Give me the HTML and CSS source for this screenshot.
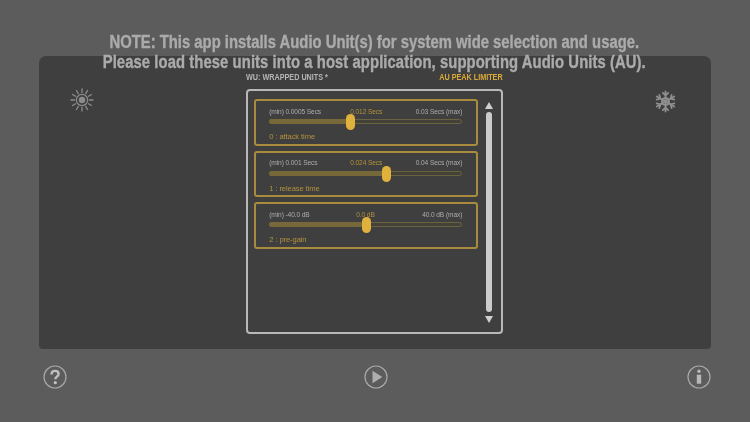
FILE: index.html
```html
<!DOCTYPE html>
<html lang="en">
<head>
<meta charset="utf-8">
<title>AU Peak Limiter</title>
<link rel="stylesheet" href="styles.css">
</head>
<body>
<div class="app">
  <main class="panel">
    <svg class="side-icon sun" viewBox="0 0 24 24" width="24" height="24" aria-hidden="true">
      <circle cx="12" cy="12" r="3.200" fill="#8c8c8c"/>
      <circle cx="12" cy="12" r="5.600" fill="none" stroke="#8c8c8c" stroke-width="1.200"/>
      <g stroke="#8c8c8c" stroke-width="1.300" stroke-linecap="round">
        <path d="M12 1v3.600M12 19.400V23M1 12h3.600M19.400 12H23"/>
        <path d="M6.500 2.500l1.800 3.100M15.700 18.400l1.800 3.100M2.500 6.500l3.100 1.800M18.400 15.700l3.100 1.800M17.500 2.500l-1.800 3.100M8.300 18.400l-1.800 3.100M21.500 6.500l-3.100 1.800M5.600 15.700l-3.100 1.800"/>
      </g>
    </svg>
    <section class="center">
      <header class="center-head">
        <span class="head-left">WU: WRAPPED UNITS *</span>
        <span class="head-right">AU PEAK LIMITER</span>
      </header>
      <div class="frame">
        <div class="cards">
          <article class="card">
            <div class="scale"><span>(min) 0.0005 Secs</span><span class="now now-a">0.012 Secs</span><span>0.03 Secs (max)</span></div>
            <div class="track"><div class="fill" style="width:41.6%"></div><div class="thumb"></div></div>
            <div class="name">0 : attack time</div>
          </article>
          <article class="card">
            <div class="scale"><span>(min) 0.001 Secs</span><span class="now now-b">0.024 Secs</span><span>0.04 Secs (max)</span></div>
            <div class="track"><div class="fill" style="width:61%"></div><div class="thumb"></div></div>
            <div class="name">1 : release time</div>
          </article>
          <article class="card">
            <div class="scale"><span>(min) -40.0 dB</span><span class="now now-c">0.0 dB</span><span>40.0 dB (max)</span></div>
            <div class="track"><div class="fill" style="width:50%"></div><div class="thumb"></div></div>
            <div class="name">2 : pre-gain</div>
          </article>
        </div>
        <div class="scroll">
          <i class="arrow up"></i>
          <i class="bar"></i>
          <i class="arrow down"></i>
        </div>
      </div>
    </section>
    <svg class="side-icon snow" viewBox="0 0 24 24" width="24" height="24" aria-hidden="true">
      <g stroke="#8f8f8f" stroke-width="1.900" fill="none" stroke-linecap="round">
        <path d="M12 1.500v21M9.200 3l2.800 2.800L14.800 3M9.200 21l2.800-2.800 2.800 2.800"/>
        <g transform="rotate(60 12 12)"><path d="M12 1.500v21M9.200 3l2.800 2.800L14.800 3M9.200 21l2.800-2.800 2.800 2.800"/></g>
        <g transform="rotate(120 12 12)"><path d="M12 1.500v21M9.200 3l2.800 2.800L14.800 3M9.200 21l2.800-2.800 2.800 2.800"/></g>
        <circle cx="12" cy="12" r="3.600" stroke-width="2.200"/>
      </g>
    </svg>
  </main>
  <footer class="footer">
    <svg viewBox="0 0 24 24" width="24" height="24" aria-hidden="true">
      <circle cx="12" cy="12" r="11" fill="none" stroke="#a8a8a8" stroke-width="1.200"/>
      <path d="M8.500 9.400c0-2.200 1.500-3.500 3.600-3.500s3.500 1.200 3.500 3c0 2.700-3.300 2.800-3.300 5.300" fill="none" stroke="#c0c0c0" stroke-width="2.400"/>
      <circle cx="12.300" cy="17.700" r="1.600" fill="#c0c0c0"/>
    </svg>
    <svg class="play" viewBox="0 0 24 24" width="24" height="24" aria-hidden="true">
      <circle cx="12" cy="12" r="11" fill="none" stroke="#a8a8a8" stroke-width="1.200"/>
      <path d="M8.500 5.800v12.400L18.300 12z" fill="#aeaeae"/>
    </svg>
    <svg viewBox="0 0 24 24" width="24" height="24" aria-hidden="true">
      <circle cx="12" cy="12" r="11" fill="none" stroke="#a8a8a8" stroke-width="1.200"/>
      <circle cx="12" cy="6.300" r="1.700" fill="#b8b8b8"/>
      <path d="M9.800 9.700h4.400v9h-4.400z" fill="#b8b8b8"/>
    </svg>
  </footer>
  <div class="note">
    <p>NOTE: This app installs Audio Unit(s) for system wide selection and usage.</p>
    <p class="note-wide">Please load these units into a host application, supporting Audio Units (AU).</p>
  </div>
</div>
</body>
</html>
```
FILE: styles.css
```css
* { box-sizing: border-box; }
html, body { margin: 0; height: 100%; }
body { background: #5c5c5c; font-family: "Liberation Sans", Arial, sans-serif; overflow: hidden; }
.app { position: relative; width: 750px; height: 422px; padding: 56px 39px 0; filter: blur(0.3px); }
.panel {
  height: 293px;
  background: #3f3f3f;
  border-radius: 7px 7px 4px 4px;
  display: flex;
  justify-content: space-between;
  padding: 16px 34.500px 0 31px;
}
.side-icon { flex: none; margin-top: 16px; }
.snow { margin-top: 18px; width: 23px; height: 23px; }
.center { width: 257px; margin-right: 1px; margin-left: 2px; }
.center-head {
  display: flex;
  justify-content: space-between;
  height: 17px;
  font-size: 8.500px;
  line-height: 10px;
  font-weight: 700;
  color: #b5b5b5;
}
.head-left { transform: scaleX(0.85); transform-origin: left center; }
.head-right { color: #dcaa3a; transform: scaleX(0.85); transform-origin: right center; }
.frame {
  height: 244.500px;
  border: 2px solid #b8b8b8;
  border-radius: 4px;
  display: flex;
  padding: 8px 0 0 6px;
}
.cards { flex: none; width: 224px; display: flex; flex-direction: column; gap: 5px; }
.card {
  height: 46.700px;
  border: 2px solid #a98b3e;
  border-radius: 3px;
  padding: 5.500px 13.500px 0;
}
.scale {
  position: relative;
  display: flex;
  justify-content: space-between;
  font-size: 6.600px;
  letter-spacing: -0.100px;
  line-height: 9px;
  color: #adadad;
}
.now { position: absolute; color: #b3923c; }
.now-a { left: 81px; }
.now-b { left: 81px; }
.now-c { left: 87px; }
.track {
  position: relative;
  height: 5px;
  margin: 3.500px 0 0;
  border: 1px solid #69633f;
  border-radius: 3px;
  background: #444238;
}
.fill { height: 5px; margin: -1px 0 0 -1px; background: #766839; border-radius: 3px 0 0 3px; }
.thumb {
  position: absolute;
  top: -6px;
  left: 0;
  width: 9px;
  height: 16px;
  border-radius: 4.500px;
  background: #e0b13c;
}
.card:nth-child(1) .thumb { left: 75.500px; }
.card:nth-child(2) .thumb { left: 112px; }
.card:nth-child(3) .thumb { left: 91.500px; }
.name { margin-top: 8px; font-size: 7.600px; line-height: 10px; color: #b3923c; letter-spacing: -0.100px; }
.scroll { flex: none; width: 23px; display: flex; flex-direction: column; align-items: center; }
.arrow { width: 0; height: 0; border-left: 4.500px solid transparent; border-right: 4.500px solid transparent; flex: none; }
.up { border-bottom: 7px solid #cfcfcf; margin-top: 3.300px; }
.down { border-top: 7px solid #cfcfcf; margin-top: 4px; }
.bar { flex: none; width: 6px; height: 200px; margin-top: 3px; background: #cbcbcb; border-radius: 3px; }
.footer {
  display: flex;
  justify-content: space-between;
  padding: 16px 0 0 4px;
}
.footer svg { flex: none; }
.play { margin-right: 3px; }
.note {
  position: absolute;
  top: 32px;
  left: 0;
  right: 1.500px;
  text-align: center;
  font-weight: 700;
  font-size: 17.500px;
  line-height: 20px;
  color: #ababab;
  -webkit-text-stroke: 0.35px #ababab;
}
.note p { margin: 0; transform: scaleX(0.848); }
.note .note-wide { letter-spacing: 0.080px; }
```
